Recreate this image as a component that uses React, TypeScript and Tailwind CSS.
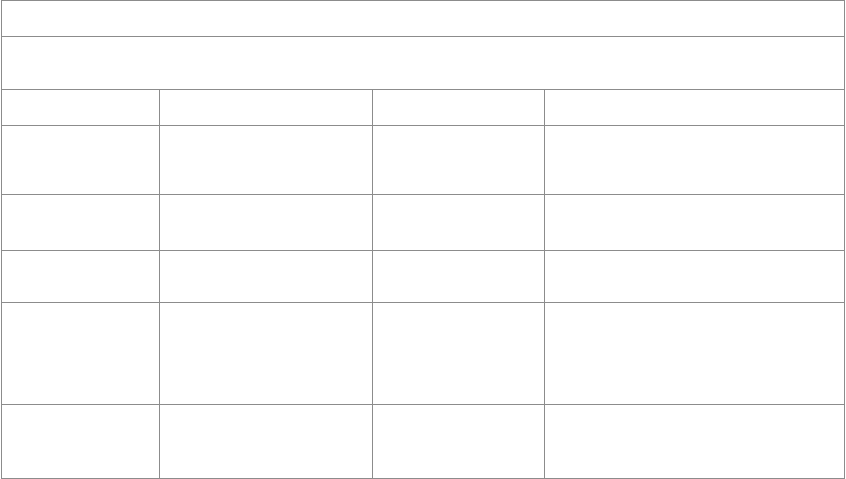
import React from 'react';

const rows = [
  { h: 'h-[69px]' },
  { h: 'h-[56px]' },
  { h: 'h-[52px]' },
  { h: 'h-[102px]' },
  { h: 'h-[74px]' },
];

const cols = ['w-[158px]', 'w-[213px]', 'w-[172px]', 'w-[300px]'];

export default function App() {
  return (
    <div className="w-[846px] h-[479px] bg-white overflow-hidden" style={{ fontFamily: '"Liberation Sans", Arial, sans-serif' }}>
      <div className="ml-[1px] w-[844px] border-l border-t border-[#8c8c8c] flex flex-col">
        <div className="h-[36px] border-r border-b border-[#8c8c8c]" />
        <div className="h-[53px] border-r border-b border-[#8c8c8c]" />
        <div className="flex h-[36px]">
          {cols.map((w, i) => (
            <div key={i} className={`${w} border-r border-b border-[#8c8c8c]`} />
          ))}
        </div>
        {rows.map((r, ri) => (
          <div key={ri} className={`flex ${r.h}`}>
            {cols.map((w, i) => (
              <div key={i} className={`${w} border-r border-b border-[#8c8c8c]`} />
            ))}
          </div>
        ))}
      </div>
    </div>
  );
}
